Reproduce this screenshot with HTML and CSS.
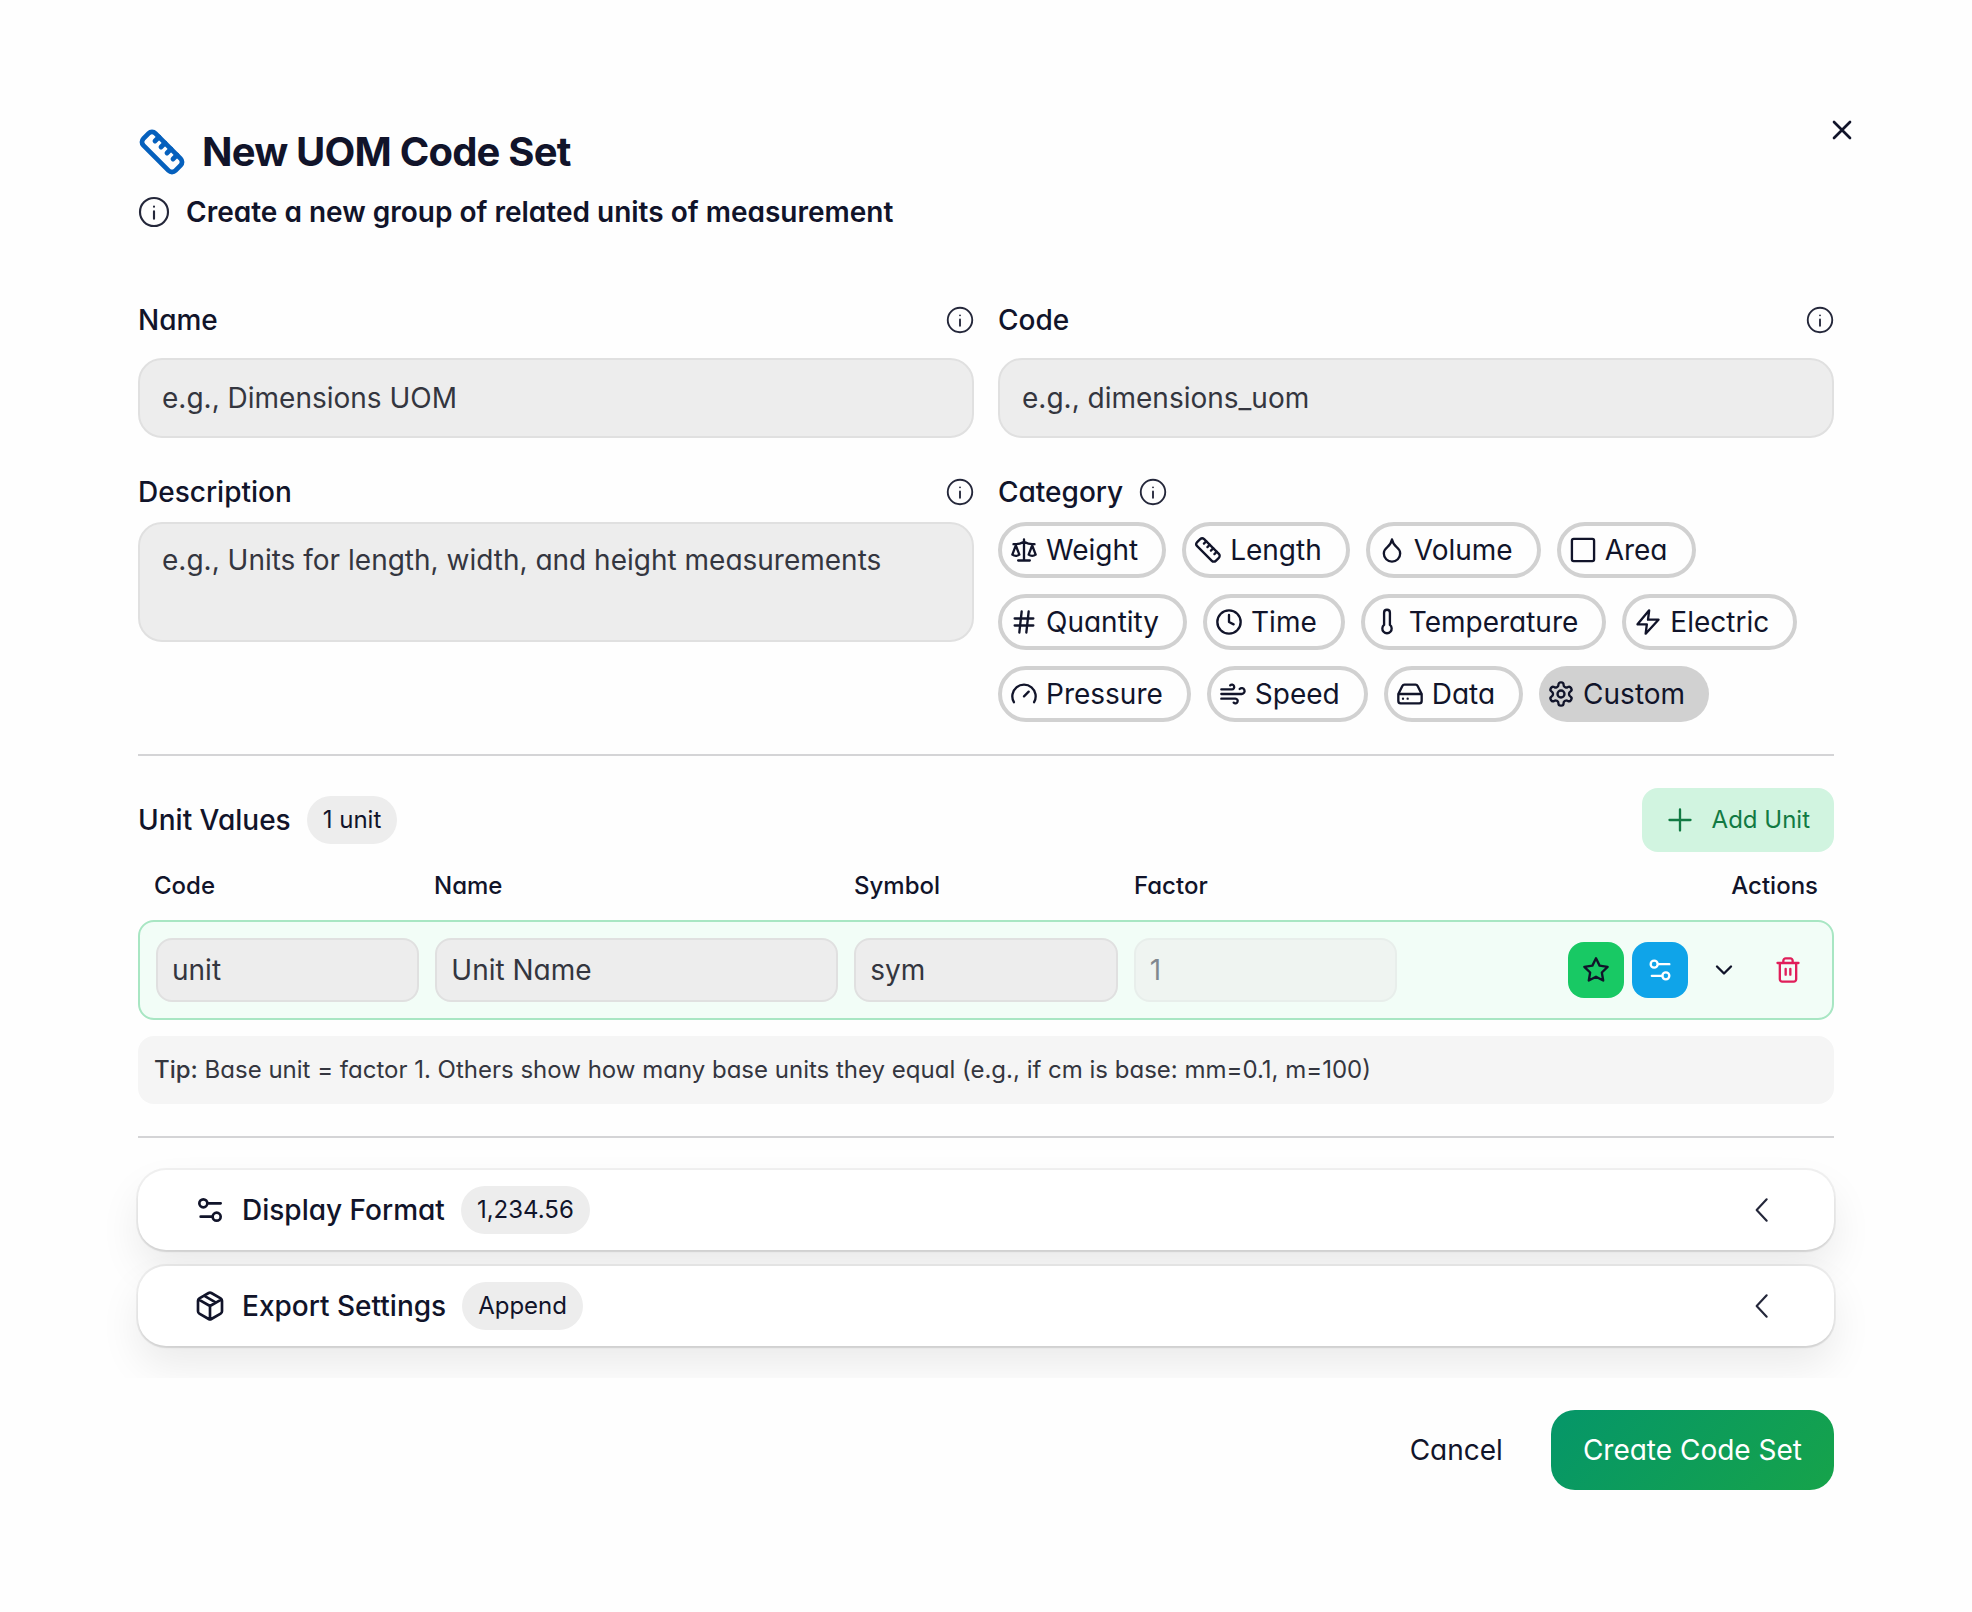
FILE: index.html
```html
<!DOCTYPE html>
<html lang="en">
<head>
    <meta charset="UTF-8">
    <meta name="viewport" content="width=device-width, initial-scale=1.0">
    <title>New UOM Code Set</title>
    <link rel="stylesheet" href="styles.css">
</head>
<body>
    <!-- shared icons -->
    <svg class="sprite" aria-hidden="true">
        <symbol id="i-info" viewBox="0 0 24 24"><circle cx="12" cy="12" r="10.500"/><path d="M12 17v-5.500M12 8h.01"/></symbol>
        <symbol id="i-ruler" viewBox="0 0 24 24"><path d="M21.3 15.3a2.4 2.4 0 0 1 0 3.4l-2.6 2.6a2.4 2.4 0 0 1-3.4 0L2.7 8.7a2.41 2.41 0 0 1 0-3.4l2.6-2.6a2.41 2.41 0 0 1 3.4 0Z"/><path d="m14.5 12.5 2-2M11.5 9.5l2-2M8.5 6.5l2-2M17.5 15.5l2-2"/></symbol>
        <symbol id="i-sliders" viewBox="0 0 24 24"><path d="M20 7h-9M14 17H5"/><circle cx="17" cy="17" r="3"/><circle cx="7" cy="7" r="3"/></symbol>
        <symbol id="i-left" viewBox="0 0 24 24"><path d="m15.500 20-7.500-8 7.500-8"/></symbol>
    </svg>

    <main class="dialog">
        <button class="close" type="button" aria-label="Close">
            <svg class="icon icon-lg" viewBox="0 0 24 24"><path d="M18 6 6 18M6 6l12 12"/></svg>
        </button>

        <header>
            <h1><svg class="icon icon-title"><use href="#i-ruler"/></svg>New UOM Code Set</h1>
            <p class="subtitle"><svg class="icon icon-lg thin"><use href="#i-info"/></svg>Create a new group of related units of measurement</p>
        </header>

        <form>
            <div class="content">
                <div class="fields">
                    <div class="field">
                        <div class="label-row"><label for="name">Name</label><svg class="icon thin"><use href="#i-info"/></svg></div>
                        <input class="input" id="name" type="text" placeholder="e.g., Dimensions UOM">
                    </div>
                    <div class="field">
                        <div class="label-row"><label for="code">Code</label><svg class="icon thin"><use href="#i-info"/></svg></div>
                        <input class="input" id="code" type="text" placeholder="e.g., dimensions_uom">
                    </div>
                    <div class="field field-tight">
                        <div class="label-row"><label for="description">Description</label><svg class="icon thin"><use href="#i-info"/></svg></div>
                        <textarea class="input" id="description" placeholder="e.g., Units for length, width, and height measurements"></textarea>
                    </div>
                    <div class="field field-tight" role="radiogroup" aria-labelledby="category">
                        <div class="label-row label-row-start"><span id="category">Category</span><svg class="icon thin"><use href="#i-info"/></svg></div>
                        <div class="pills">
                            <label class="pill"><input type="radio" name="category"><svg class="icon" viewBox="0 0 24 24"><path d="m16 16 3-8 3 8c-.87.65-1.92 1-3 1s-2.130-.35-3-1ZM2 16l3-8 3 8c-.87.65-1.92 1-3 1s-2.130-.35-3-1ZM7 21h10M12 3v18M3 7h2c2 0 5-1 7-2 2 1 5 2 7 2h2"/></svg>Weight</label>
                            <label class="pill"><input type="radio" name="category"><svg class="icon"><use href="#i-ruler"/></svg>Length</label>
                            <label class="pill"><input type="radio" name="category"><svg class="icon" viewBox="0 0 24 24"><path d="M12 22a7 7 0 0 0 7-7c0-2-1-3.900-3-5.500s-3.500-4-4-6.500c-.5 2.500-2 4.900-4 6.500C6 11.100 5 13 5 15a7 7 0 0 0 7 7z"/></svg>Volume</label>
                            <label class="pill"><input type="radio" name="category"><svg class="icon" viewBox="0 0 24 24"><rect x="2.500" y="2.500" width="19" height="19" rx="1.500"/></svg>Area</label>
                            <label class="pill"><input type="radio" name="category"><svg class="icon" viewBox="0 0 24 24"><path d="M4 9h16M4 15h16M10 3 8 21M16 3l-2 18"/></svg>Quantity</label>
                            <label class="pill"><input type="radio" name="category"><svg class="icon" viewBox="0 0 24 24"><circle cx="12" cy="12" r="10"/><path d="M12 6v6l4 2"/></svg>Time</label>
                            <label class="pill"><input type="radio" name="category"><svg class="icon" viewBox="0 0 24 24"><path d="M14.500 4v10.540a4 4 0 1 1-5 0V4a2.500 2.500 0 0 1 5 0Z"/></svg>Temperature</label>
                            <label class="pill"><input type="radio" name="category"><svg class="icon" viewBox="0 0 24 24"><path d="M13 2 3 14h8l-1 8 11-12h-9z"/></svg>Electric</label>
                            <label class="pill"><input type="radio" name="category"><svg class="icon" viewBox="0 0 24 24"><path d="m12 14 4-4M3.340 19a10 10 0 1 1 17.320 0"/></svg>Pressure</label>
                            <label class="pill"><input type="radio" name="category"><svg class="icon" viewBox="0 0 24 24"><path d="M17.700 7.700a2.500 2.500 0 1 1 1.800 4.300H2M9.600 4.600A2 2 0 1 1 11 8H2M12.600 19.400A2 2 0 1 0 14 16H2"/></svg>Speed</label>
                            <label class="pill"><input type="radio" name="category"><svg class="icon" viewBox="0 0 24 24"><path d="M22 12H2M5.450 5.110 2 12v6a2 2 0 0 0 2 2h16a2 2 0 0 0 2-2v-6l-3.450-6.890A2 2 0 0 0 16.760 4H7.240a2 2 0 0 0-1.790 1.110zM6 16h.01M10 16h.01"/></svg>Data</label>
                            <label class="pill"><input type="radio" name="category" checked><svg class="icon" viewBox="0 0 24 24"><path d="M12.220 2h-.44a2 2 0 0 0-2 2v.18a2 2 0 0 1-1 1.730l-.43.25a2 2 0 0 1-2 0l-.15-.08a2 2 0 0 0-2.730.73l-.22.38a2 2 0 0 0 .73 2.730l.15.1a2 2 0 0 1 1 1.720v.51a2 2 0 0 1-1 1.740l-.15.09a2 2 0 0 0-.73 2.730l.22.38a2 2 0 0 0 2.730.73l.15-.08a2 2 0 0 1 2 0l.43.25a2 2 0 0 1 1 1.730V20a2 2 0 0 0 2 2h.44a2 2 0 0 0 2-2v-.18a2 2 0 0 1 1-1.730l.43-.25a2 2 0 0 1 2 0l.15.08a2 2 0 0 0 2.730-.73l.22-.39a2 2 0 0 0-.73-2.730l-.15-.08a2 2 0 0 1-1-1.740v-.5a2 2 0 0 1 1-1.740l.15-.09a2 2 0 0 0 .73-2.730l-.22-.38a2 2 0 0 0-2.730-.73l-.15.08a2 2 0 0 1-2 0l-.43-.25a2 2 0 0 1-1-1.730V4a2 2 0 0 0-2-2z"/><circle cx="12" cy="12" r="3"/></svg>Custom</label>
                        </div>
                    </div>
                </div>

                <hr>

                <div class="units-bar">
                    <h2>Unit Values</h2>
                    <span class="badge">1 unit</span>
                    <button class="add" type="button"><svg class="icon" viewBox="0 0 24 24"><path d="M3 12h18M12 3v18"/></svg>Add Unit</button>
                </div>

                <table class="units">
                    <thead>
                        <tr><th>Code</th><th class="wide">Name</th><th>Symbol</th><th>Factor</th><th class="wide actions-head">Actions</th></tr>
                    </thead>
                    <tbody>
                        <tr>
                            <td><input class="input input-sm" type="text" placeholder="unit" aria-label="Code"></td>
                            <td class="wide"><input class="input input-sm" type="text" placeholder="Unit Name" aria-label="Name"></td>
                            <td><input class="input input-sm" type="text" placeholder="sym" aria-label="Symbol"></td>
                            <td><input class="input input-sm" type="text" value="1" aria-label="Factor" disabled></td>
                            <td class="wide actions">
                                <button class="action base" type="button" aria-label="Base unit"><svg class="icon" viewBox="0 0 24 24"><path d="m12 2 3.090 6.260L22 9.270l-5 4.870 1.180 6.880L12 17.770l-6.180 3.250L7 14.140 2 9.270l6.910-1.010z"/></svg></button>
                                <button class="action format" type="button" aria-label="Format"><svg class="icon"><use href="#i-sliders"/></svg></button>
                                <button class="action" type="button" aria-label="Expand"><svg class="icon" viewBox="0 0 24 24"><path d="m6 9 6 6 6-6"/></svg></button>
                                <button class="action delete" type="button" aria-label="Delete"><svg class="icon" viewBox="0 0 24 24"><path d="M3 6h18M19 6v14c0 1-1 2-2 2H7c-1 0-2-1-2-2V6M8 6V4c0-1 1-2 2-2h4c1 0 2 1 2 2v2M10 11v5M14 11v5"/></svg></button>
                            </td>
                        </tr>
                    </tbody>
                </table>

                <p class="tip"><strong>Tip:</strong> Base unit = factor 1. Others show how many base units they equal (e.g., if cm is base: mm=0.1, m=100)</p>

                <hr>

                <div class="panels">
                    <button class="panel" type="button" aria-expanded="false">
                        <svg class="icon icon-lg"><use href="#i-sliders"/></svg>
                        <span>Display Format</span>
                        <span class="badge">1,234.56</span>
                        <svg class="icon icon-lg thin chevron"><use href="#i-left"/></svg>
                    </button>
                    <button class="panel" type="button" aria-expanded="false">
                        <svg class="icon icon-lg" viewBox="0 0 24 24"><path d="M11 21.730a2 2 0 0 0 2 0l7-4A2 2 0 0 0 21 16V8a2 2 0 0 0-1-1.730l-7-4a2 2 0 0 0-2 0l-7 4A2 2 0 0 0 3 8v8a2 2 0 0 0 1 1.730zM12 22V12M3.290 7 12 12l8.710-5M7.500 4.270l9 5.150"/></svg>
                        <span>Export Settings</span>
                        <span class="badge">Append</span>
                        <svg class="icon icon-lg thin chevron"><use href="#i-left"/></svg>
                    </button>
                </div>
            </div>

            <footer>
                <button class="btn" type="button">Cancel</button>
                <button class="btn btn-primary" type="submit">Create Code Set</button>
            </footer>
        </form>
    </main>
</body>
</html>
```

FILE: styles.css
```css
* {
    box-sizing: border-box;
}
body {
    margin: 0;
    padding: 90px 94px;
    background-color: #fefefe;
    color: #11142a;
    font-family: 'Inter', 'Liberation Sans', sans-serif;
    font-feature-settings: "cv11";
    font-size: 28px;
    line-height: 40px;
}
input, textarea, button {
    font: inherit;
    font-feature-settings: inherit;
    color: inherit;
}
button {
    border: none;
    background: none;
    padding: 0;
    cursor: pointer;
}
h1, h2, p {
    margin: 0;
}
.sprite {
    position: absolute;
    width: 0;
    height: 0;
}
.icon {
    width: 28px;
    height: 28px;
    flex: none;
    fill: none;
    stroke: currentColor;
    stroke-width: 2;
    stroke-linecap: round;
    stroke-linejoin: round;
}
.icon-lg {
    width: 32px;
    height: 32px;
}
.icon-title {
    width: 48px;
    height: 48px;
    color: #0560bd;
    stroke-width: 2.4;
}
.thin {
    stroke-width: 1.6;
    color: #24273a;
}
.dialog {
    position: relative;
    padding: 40px 44px 32px;
}
.close {
    position: absolute;
    top: 24px;
    right: 20px;
    display: flex;
}

/* heading */
h1 {
    display: flex;
    align-items: center;
    gap: 16px;
    height: 44px;
    font-size: 40px;
    font-weight: 700;
    letter-spacing: -0.02em;
}
.subtitle {
    display: flex;
    align-items: center;
    gap: 16px;
    margin-top: 18px;
    font-weight: 600;
}

/* room around the cards so that their shadow is clipped late */
.content {
    margin: 0 -44px;
    padding: 68px 44px 32px;
    overflow: hidden;
}
.fields {
    display: grid;
    grid-template-columns: 1fr 1fr;
    gap: 34px 24px;
}
.field {
    display: flex;
    flex-direction: column;
    gap: 18px;
}
.field-tight {
    gap: 10px;
}
.label-row {
    display: flex;
    align-items: center;
    justify-content: space-between;
    font-weight: 500;
}
.label-row-start {
    justify-content: flex-start;
    gap: 16px;
}
.input {
    width: 100%;
    height: 80px;
    padding: 0 22px;
    border: 2px solid #e0e0e0;
    border-radius: 24px;
    background-color: #ededed;
}
.input::placeholder {
    color: #34363f;
    opacity: 1;
}
textarea.input {
    display: block;
    height: 120px;
    padding: 16px 22px;
    resize: none;
}
.pills {
    display: flex;
    flex-wrap: wrap;
    gap: 16px;
}
.pill {
    display: flex;
    align-items: center;
    gap: 8px;
    height: 56px;
    padding: 0 24px 0 8px;
    border: 4px solid #d1d1d1;
    border-radius: 28px;
    cursor: pointer;
}
.pill input {
    position: absolute;
    opacity: 0;
    pointer-events: none;
}
.pill:has(:checked) {
    border-width: 0;
    background-color: #d1d1d1;
}
hr {
    height: 2px;
    margin: 32px 0;
    border: none;
    background-color: #d4d4d6;
}

/* unit values */
.units-bar {
    display: flex;
    align-items: center;
    gap: 16px;
}
h2 {
    font-size: 28px;
    font-weight: 500;
}
.badge {
    height: 48px;
    padding: 0 16px;
    border-radius: 24px;
    background-color: #ededed;
    font-size: 24px;
    font-weight: 400;
    line-height: 48px;
}
.add {
    display: flex;
    align-items: center;
    gap: 18px;
    height: 64px;
    margin-left: auto;
    padding: 0 24px;
    border-radius: 16px;
    background-color: #d1f4e0;
    color: #127a43;
    font-size: 24px;
}
.units, .units thead, .units tbody {
    display: block;
}
.units tr {
    display: grid;
    grid-template-columns: repeat(12, 1fr);
    gap: 16px;
}
.units th, .units td {
    grid-column: span 2;
    min-width: 0;
    padding: 0;
}
.units .wide {
    grid-column: span 3;
}
.units th {
    font-size: 24px;
    font-weight: 500;
    line-height: 36px;
    text-align: left;
}
.units .actions-head {
    text-align: right;
}
.units thead tr {
    padding: 16px;
}
.units tbody tr {
    padding: 16px;
    border: 2px solid #a8e6c3;
    border-radius: 16px;
    background-color: #f2fdf7;
}
.input-sm {
    display: block;
    height: 64px;
    padding: 0 14px;
    border-radius: 16px;
}
.input-sm:disabled {
    color: #11142a;
    opacity: 0.5;
}
.actions {
    display: flex;
    align-items: center;
    justify-content: flex-end;
    gap: 8px;
}
.action {
    display: flex;
    align-items: center;
    justify-content: center;
    width: 56px;
    height: 56px;
    border-radius: 16px;
}
.base {
    background-color: #18c964;
}
.format {
    background-color: #0fa4e9;
    color: #fff;
}
.delete {
    color: #e01e5a;
}
.tip {
    margin-top: 16px;
    padding: 16px;
    border-radius: 16px;
    background-color: #f5f5f5;
    color: #34363f;
    font-size: 24px;
    line-height: 36px;
}
.tip strong {
    font-weight: 500;
}

/* collapsed cards */
.panels {
    display: flex;
    flex-direction: column;
    gap: 16px;
}
.panel {
    display: flex;
    align-items: center;
    gap: 16px;
    height: 80px;
    padding: 0 56px;
    border-radius: 28px;
    background-color: #fff;
    box-shadow: 0 0 0 2px rgba(0, 0, 0, 0.05), 0 2px 2px rgba(0, 0, 0, 0.08), 0 20px 40px rgba(0, 0, 0, 0.08);
    font-weight: 500;
}
.chevron {
    margin-left: auto;
}

footer {
    display: flex;
    justify-content: flex-end;
    gap: 16px;
    padding-top: 32px;
}
.btn {
    height: 80px;
    padding: 0 32px;
    border-radius: 24px;
}
.btn-primary {
    background-image: linear-gradient(135deg, #059669, #16a34a);
    color: #fff;
}
```
